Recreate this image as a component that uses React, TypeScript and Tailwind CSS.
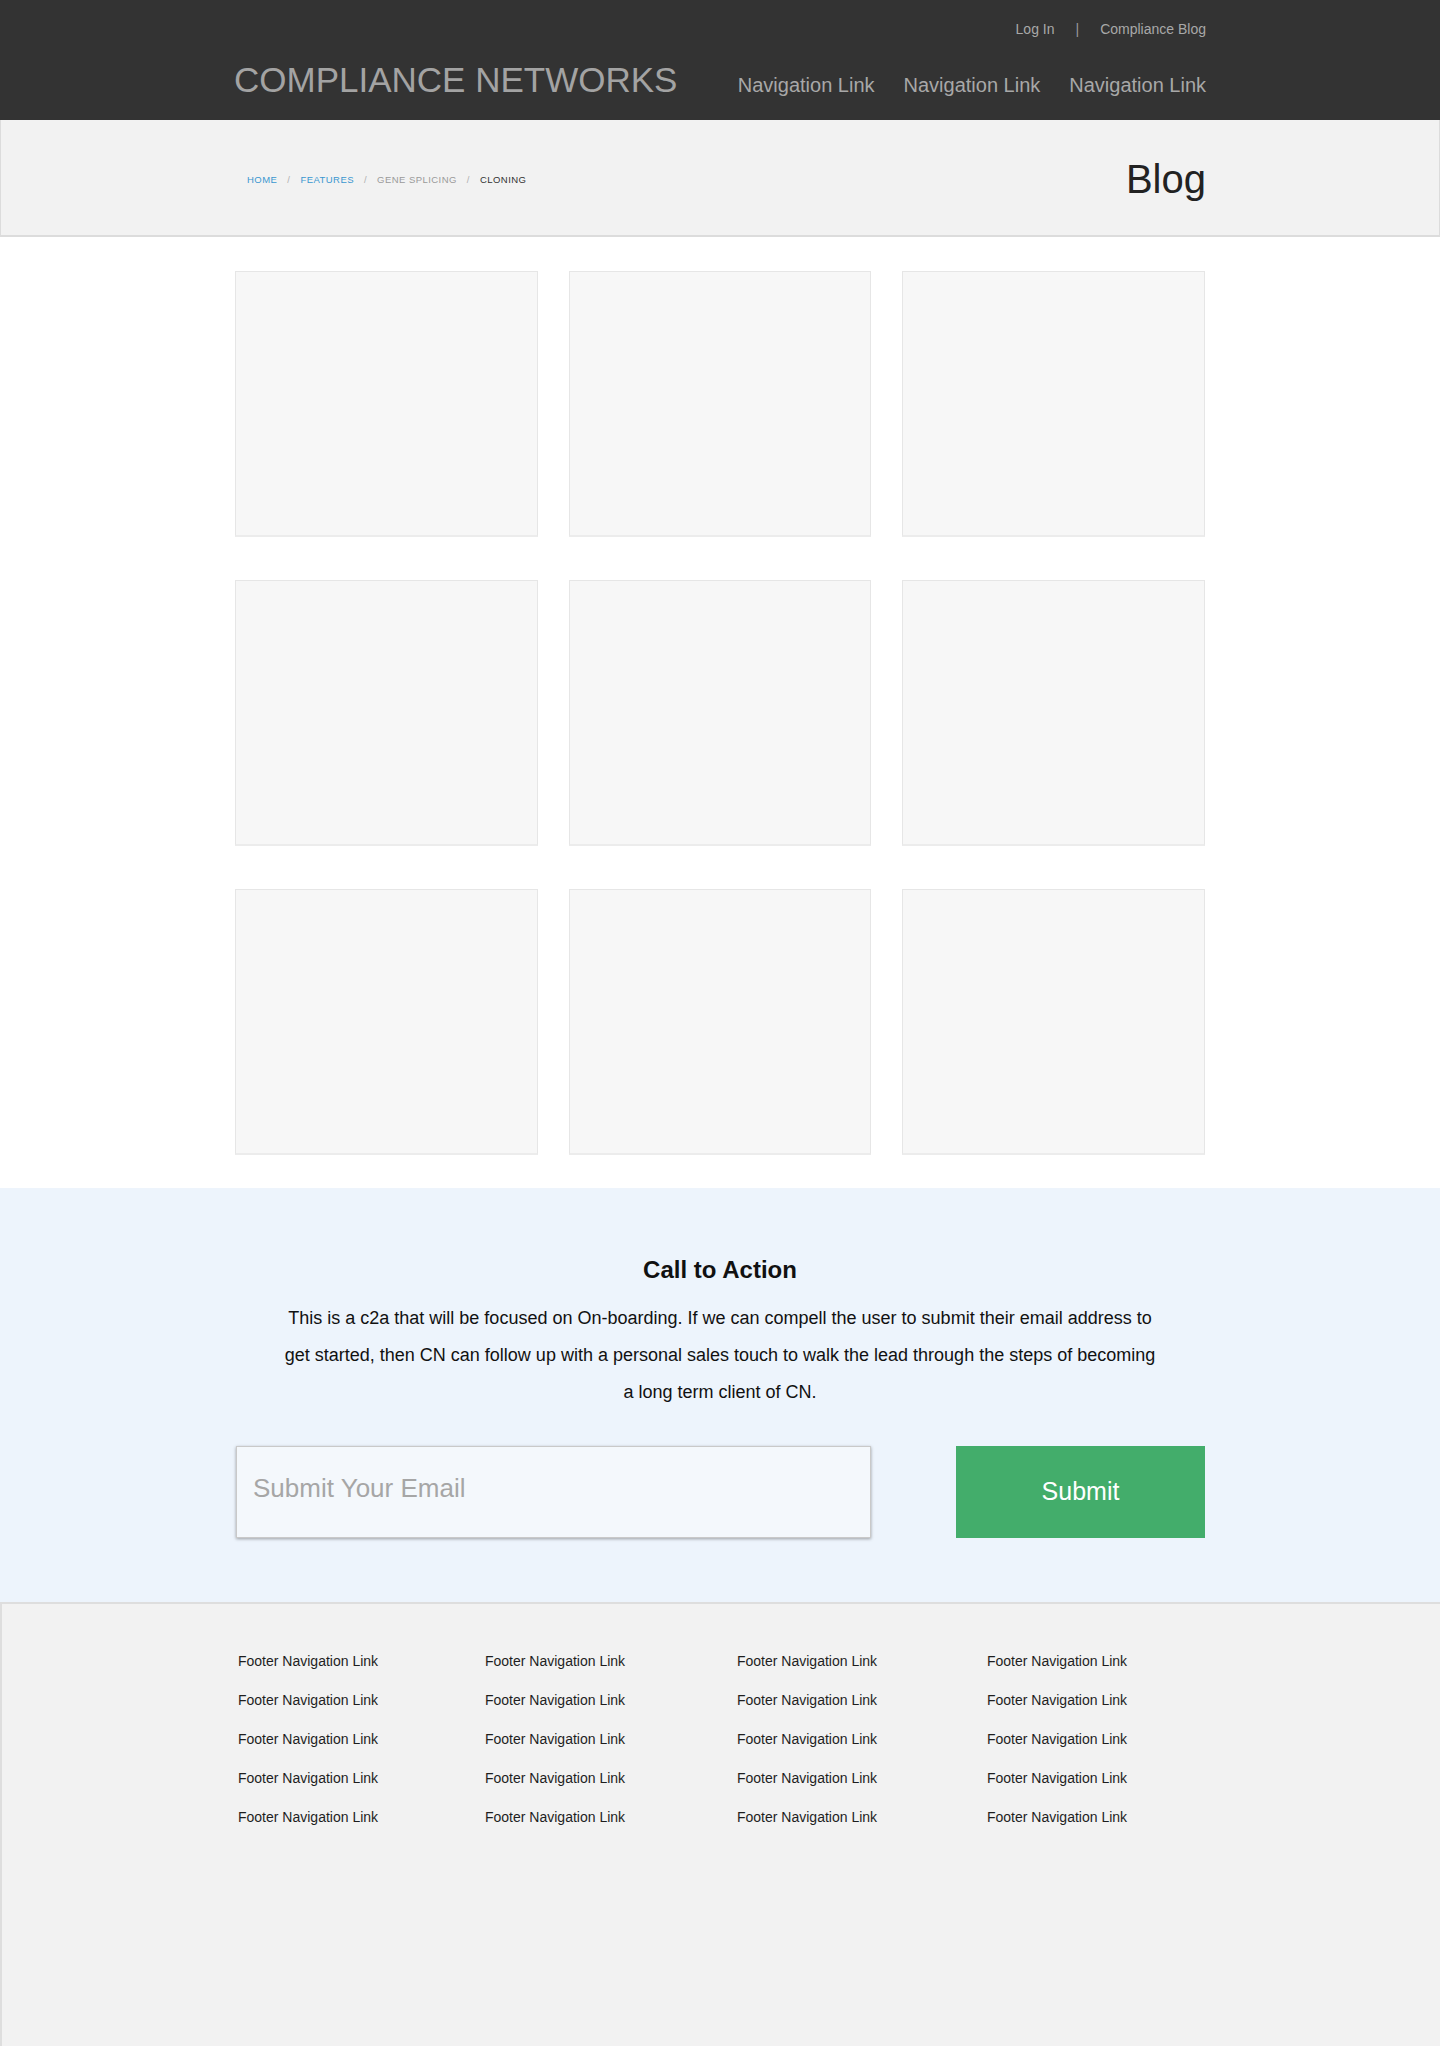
import { useState } from "react";

const NAV_LINKS = ["Navigation Link", "Navigation Link", "Navigation Link"];
const CRUMBS = [
  { label: "HOME", cls: "text-[#3a97d0]" },
  { label: "FEATURES", cls: "text-[#3a97d0]" },
  { label: "GENE SPLICING", cls: "text-[#9a9a9a]" },
  { label: "CLONING", cls: "text-[#333]" },
];
const FOOTER_COLS = ["w-[247px]", "w-[252px]", "w-[250px]", "w-[220px]"];

function BlogCard() {
  return <div className="h-[266px] border border-[#e6e6e6] border-b-2 border-b-[#ececec] bg-[#f7f7f7]" />;
}

export default function App() {
  const [email, setEmail] = useState("");

  return (
    <div className="min-h-screen bg-white font-['Liberation_Sans',Arial,sans-serif]">
      {/* top bar */}
      <header className="h-[120px] bg-[#333333]">
        <div className="mx-auto w-[972px] pt-[19px]">
          <div className="flex items-center justify-end gap-[21px] text-[14px] leading-5 text-[#a8a8a8]">
            <a>Log In</a>
            <span className="text-[#9a9a9a]">|</span>
            <a>Compliance Blog</a>
          </div>
          <div className="mt-[21px] flex items-baseline justify-between">
            <div className="text-[35px] leading-10 text-[#a3a3a3]">COMPLIANCE NETWORKS</div>
            <nav className="flex gap-[29px] text-[20px] leading-7 text-[#a8a8a8]">
              {NAV_LINKS.map((l, i) => <a key={i}>{l}</a>)}
            </nav>
          </div>
        </div>
      </header>

      {/* breadcrumb band */}
      <section className="h-[117px] border-x border-b-2 border-[#dcdcdc] bg-[#f2f2f2]">
        <div className="mx-auto flex h-full w-[972px] items-center justify-between pl-[13px]">
          <div className="flex items-center pt-[5px] text-[9.5px] tracking-[0.45px]">
            {CRUMBS.map((c, i) => (
              <span key={c.label} className="flex items-center">
                {i > 0 && <span className="mx-[10px] text-[#b0b0b0]">/</span>}
                <span className={c.cls}>{c.label}</span>
              </span>
            ))}
          </div>
          <h1 className="pt-[2px] text-[40px] leading-[48px] text-[#222]">Blog</h1>
        </div>
      </section>

      {/* blog grid */}
      <main className="mx-auto grid w-[970px] grid-cols-3 gap-x-[31px] gap-y-[43px] pt-[34px] pb-[33px]">
        {Array.from({ length: 9 }).map((_, i) => <BlogCard key={i} />)}
      </main>

      {/* call to action */}
      <section className="h-[414px] bg-[#edf4fc] pt-[66px]">
        <h2 className="text-center text-[24px] font-bold leading-8 text-[#111]">Call to Action</h2>
        <p className="mx-auto mt-[14px] w-[880px] text-center text-[18px] leading-[37px] text-[#111]">
          This is a c2a that will be focused on On-boarding. If we can compell the user to submit their email address to get started, then CN can follow up with a personal sales touch to walk the lead through the steps of becoming a long term client of CN.
        </p>
        <div className="mx-auto mt-[35px] flex w-[970px] justify-between">
          <input value={email} onChange={(e) => setEmail(e.target.value)} placeholder="Submit Your Email"
            className="ml-px h-[92px] w-[635px] border border-[#c9c9c9] bg-[#f4f8fc] px-4 pb-[8px] text-[26px] text-[#333] placeholder-[#a6a6a6] shadow-[0_1px_3px_rgba(0,0,0,0.35)] outline-none" />
          <button className="h-[92px] w-[249px] bg-[#43ad6b] text-[25px] text-white">Submit</button>
        </div>
      </section>

      {/* footer */}
      <footer className="h-[445px] border-t-2 border-l-2 border-[#dedede] bg-[#f2f2f2] pt-[47px]">
        <div className="mx-auto flex w-[972px] pl-[3px]">
          {FOOTER_COLS.map((w, c) => (
            <ul key={c} className={`${w} flex flex-col gap-[19px]`}>
              {Array.from({ length: 5 }).map((_, r) => (
                <li key={r} className="text-[14px] leading-5 text-[#1e1e1e]">Footer Navigation Link</li>
              ))}
            </ul>
          ))}
        </div>
      </footer>
    </div>
  );
}
